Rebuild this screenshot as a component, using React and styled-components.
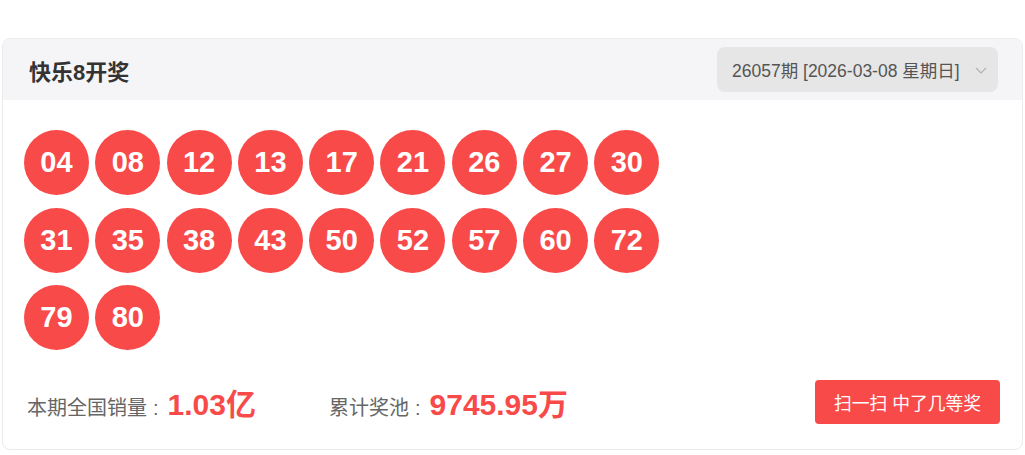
import React from 'react';
import styled, { createGlobalStyle } from 'styled-components';

const GlobalStyle = createGlobalStyle`
  body {
    margin: 0;
    background: #fff;
    font-family: "Liberation Sans", "Noto Sans CJK SC", sans-serif;
  }
`;

const Page = styled.div`
  padding: 38px 2px 0 2px;
`;

const Card = styled.div`
  border: 1px solid #ebebeb;
  border-radius: 8px;
  overflow: hidden;
  background: #fff;
`;

const Header = styled.div`
  display: flex;
  align-items: center;
  justify-content: space-between;
  height: 61px;
  padding: 0 24px 0 26px;
  background: #f5f5f8;
`;

const Title = styled.h2`
  margin: 0;
  font-size: 22px;
  font-weight: bold;
  color: #333;
`;

const IssueSelect = styled.div`
  display: flex;
  align-items: center;
  justify-content: space-between;
  box-sizing: border-box;
  width: 281px;
  height: 45px;
  padding: 0 10px 0 15px;
  border-radius: 8px;
  background: #e6e6e6;
  color: #555;
  font-size: 17.5px;
  cursor: pointer;
`;

const Chevron = styled.svg`
  width: 14px;
  height: 14px;
  flex-shrink: 0;
`;

const Body = styled.div`
  padding: 30px 22px 25px 21px;
`;

const Balls = styled.div`
  display: grid;
  grid-template-columns: repeat(9, 65px);
  column-gap: 6.3px;
  row-gap: 12.5px;
`;

const Ball = styled.div`
  display: flex;
  align-items: center;
  justify-content: center;
  width: 65px;
  height: 65px;
  border-radius: 50%;
  background: #f94a4a;
  color: #fff;
  font-size: 29px;
  font-weight: bold;
`;

const Footer = styled.div`
  display: flex;
  align-items: center;
  margin-top: 30px;
  padding-left: 3px;
`;

const Stat = styled.div`
  display: flex;
  align-items: baseline;
  margin-right: ${(p) => p.$gap || 0}px;
`;

const Label = styled.span`
  font-size: 20px;
  color: #666;
`;

const Colon = styled.span`
  margin: 0 9px 0 6px;
  font-size: 20px;
  color: #666;
`;

const Value = styled.span`
  font-size: 30px;
  font-weight: bold;
  color: #f94a4a;
`;

const ScanButton = styled.button`
  margin-left: auto;
  width: 185px;
  height: 44px;
  border: none;
  border-radius: 4px;
  background: #f94a4a;
  color: #fff;
  font-family: inherit;
  font-size: 17.8px;
  cursor: pointer;
`;

const numbers = [
  '04', '08', '12', '13', '17', '21', '26', '27', '30',
  '31', '35', '38', '43', '50', '52', '57', '60', '72',
  '79', '80',
];

export default function App() {
  return (
    <Page>
      <GlobalStyle />
      <Card>
        <Header>
          <Title>快乐8开奖</Title>
          <IssueSelect>
            <span>26057期 [2026-03-08 星期日]</span>
            <Chevron viewBox="0 0 14 14">
              <path d="M2 5l5 5 5-5" fill="none" stroke="#b0b0b0" strokeWidth="1.2" />
            </Chevron>
          </IssueSelect>
        </Header>
        <Body>
          <Balls>
            {numbers.map((n) => (
              <Ball key={n}>{n}</Ball>
            ))}
          </Balls>
          <Footer>
            <Stat $gap={73}>
              <Label>本期全国销量</Label>
              <Colon>:</Colon>
              <Value>1.03亿</Value>
            </Stat>
            <Stat>
              <Label>累计奖池</Label>
              <Colon>:</Colon>
              <Value>9745.95万</Value>
            </Stat>
            <ScanButton>扫一扫 中了几等奖</ScanButton>
          </Footer>
        </Body>
      </Card>
    </Page>
  );
}
